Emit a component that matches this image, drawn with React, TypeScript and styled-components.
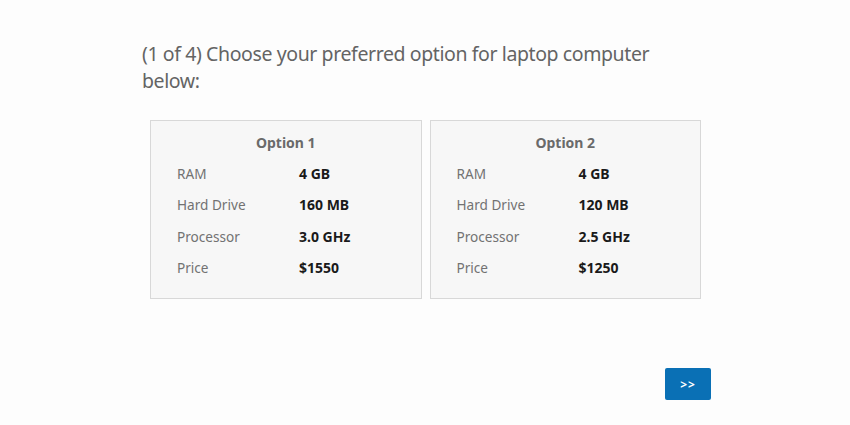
import React from "react";
import styled, { createGlobalStyle } from "styled-components";

const GlobalStyle = createGlobalStyle`
  html, body {
    margin: 0;
    padding: 0;
    background: #fdfdfd;
    font-family: "Noto Sans", "Open Sans", sans-serif;
  }
`;

const Page = styled.div`
  width: 850px;
  height: 425px;
  box-sizing: border-box;
  padding: 40px 0 0 142px;
`;

const Container = styled.div`
  width: 569px;
`;

const Question = styled.h2`
  margin: 0;
  font-size: 19.5px;
  line-height: 27px;
  letter-spacing: -0.4px;
  font-weight: 400;
  color: #646464;
`;

const Options = styled.div`
  display: flex;
  gap: 8px;
  margin: 26px 10px 0 8px;
`;

const Card = styled.div`
  flex: 1;
  box-sizing: border-box;
  height: 179px;
  background: #f7f7f7;
  border: 1px solid #d8d8d8;
  padding: 12px 0 0 26px;
`;

const CardTitle = styled.div`
  margin-left: -26px;
  text-align: center;
  font-size: 14px;
  line-height: 20px;
  font-weight: 700;
  color: #6a6a6a;
  margin-bottom: 5px;
`;

const Row = styled.div`
  display: grid;
  grid-template-columns: 122px 1fr;
  height: 31.3px;
  align-items: center;
  font-size: 13.6px;
`;

const Label = styled.span`
  color: #727272;
`;

const Value = styled.span`
  color: #1a1a1a;
  font-weight: 700;
  font-size: 14px;
`;

const Footer = styled.div`
  display: flex;
  justify-content: flex-end;
  margin-top: 69px;
`;

const NextButton = styled.button`
  width: 46px;
  height: 32px;
  border: none;
  border-radius: 2px;
  background: #0a70b5;
  color: #fff;
  font-family: inherit;
  font-weight: 700;
  font-size: 12px;
  letter-spacing: 1px;
  cursor: pointer;
`;

type Option = {
  title: string;
  specs: [string, string][];
};

const options: Option[] = [
  {
    title: "Option 1",
    specs: [
      ["RAM", "4 GB"],
      ["Hard Drive", "160 MB"],
      ["Processor", "3.0 GHz"],
      ["Price", "$1550"],
    ],
  },
  {
    title: "Option 2",
    specs: [
      ["RAM", "4 GB"],
      ["Hard Drive", "120 MB"],
      ["Processor", "2.5 GHz"],
      ["Price", "$1250"],
    ],
  },
];

export default function App() {
  return (
    <>
      <GlobalStyle />
      <Page>
        <Container>
          <Question>
            (1 of 4) Choose your preferred option for laptop computer below:
          </Question>
          <Options>
            {options.map((opt) => (
              <Card key={opt.title}>
                <CardTitle>{opt.title}</CardTitle>
                {opt.specs.map(([label, value]) => (
                  <Row key={label}>
                    <Label>{label}</Label>
                    <Value>{value}</Value>
                  </Row>
                ))}
              </Card>
            ))}
          </Options>
          <Footer>
            <NextButton>&gt;&gt;</NextButton>
          </Footer>
        </Container>
      </Page>
    </>
  );
}
